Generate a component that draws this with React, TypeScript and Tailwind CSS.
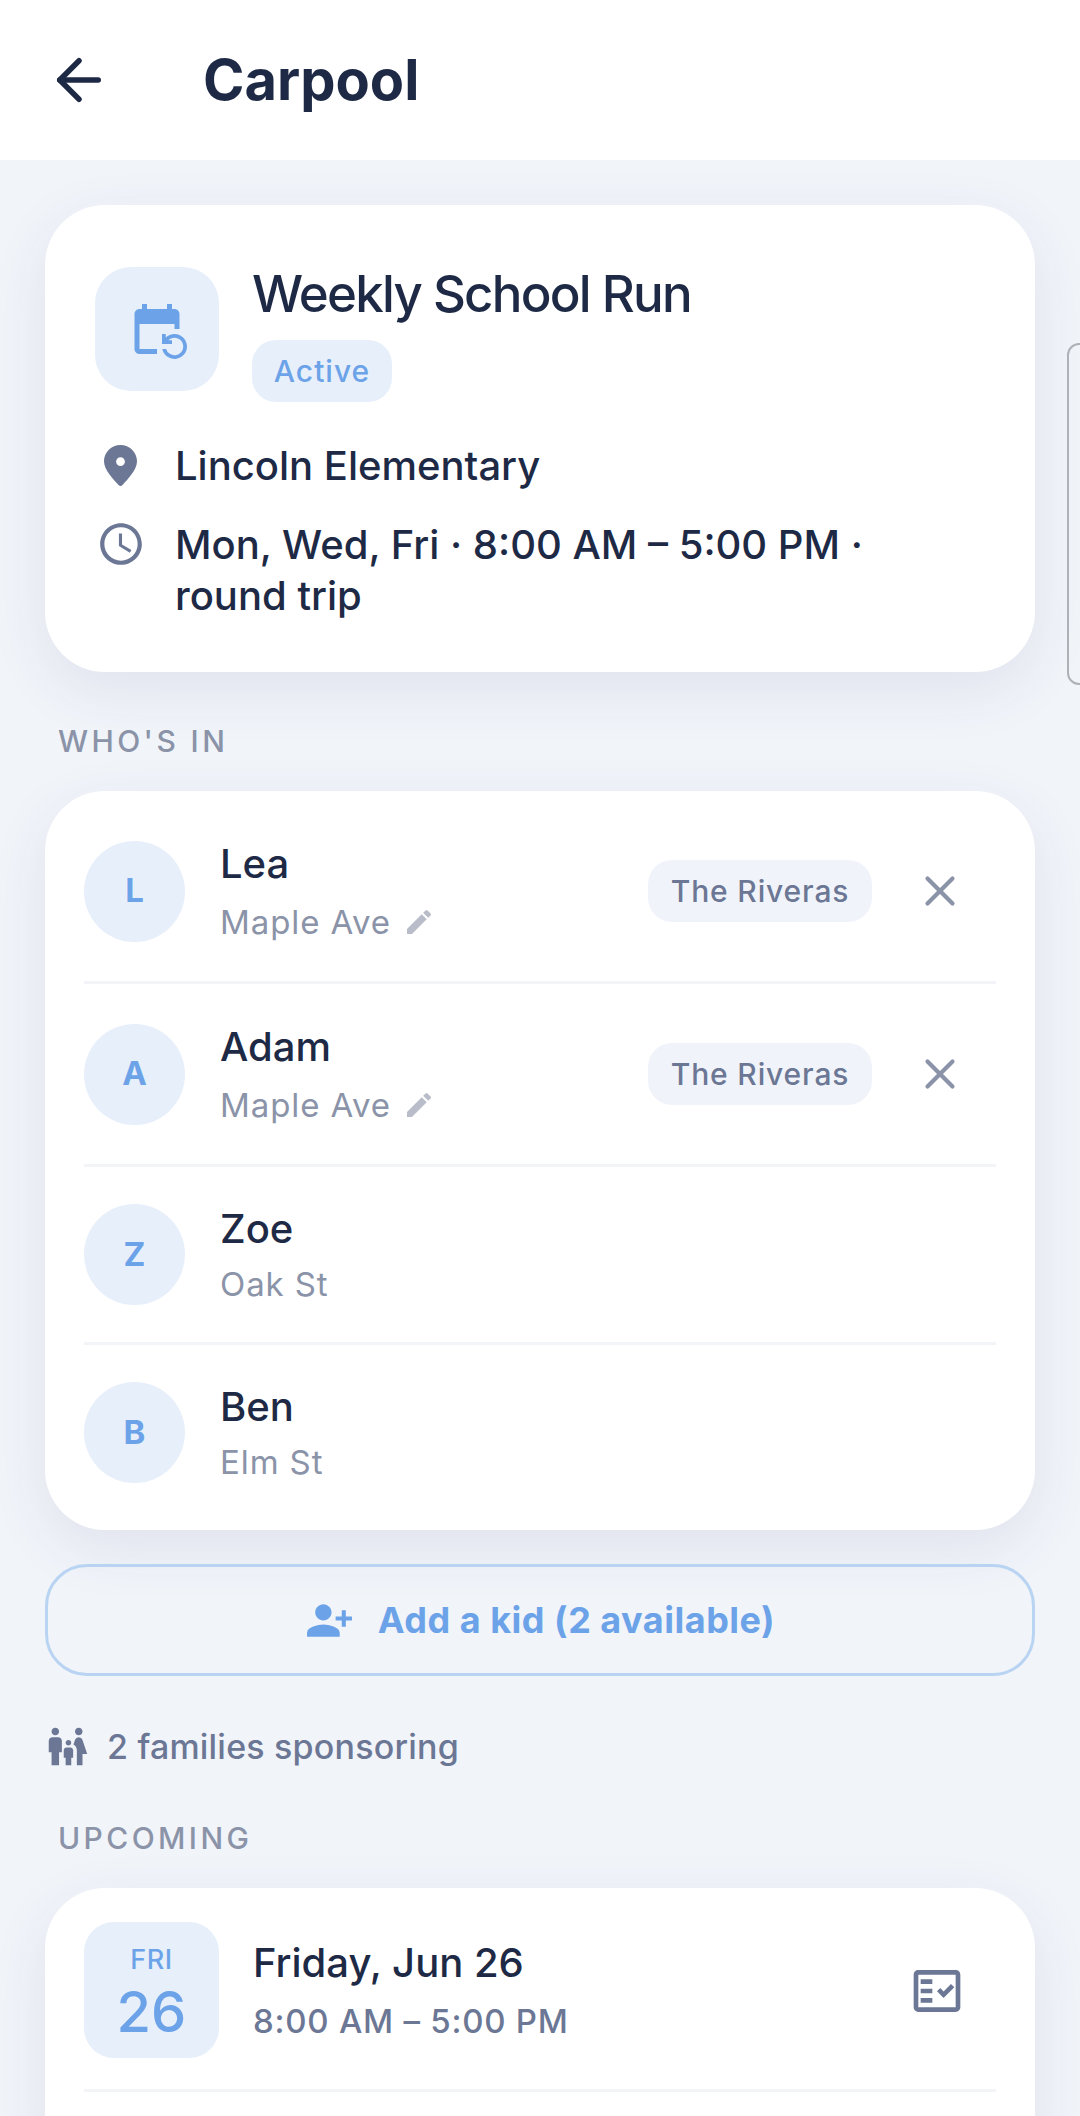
import React from "react";
import { ArrowLeft, X } from "lucide-react";
import { MdEventRepeat, MdAccessTime, MdEdit, MdPersonAddAlt1, MdFamilyRestroom, MdOutlineFactCheck } from "react-icons/md";

const Avatar = ({ c }: { c: string }) => (
  <div className="flex h-[101px] w-[101px] shrink-0 items-center justify-center rounded-full bg-[#e7effb] text-[33px] font-bold text-[#6ca3e8]">{c}</div>
);

const Kid = ({ c, name, place, editable, last }: { c: string; name: string; place: string; editable?: boolean; last?: boolean }) => (
  <div className={`flex items-center ${editable ? "h-[183px]" : last ? "h-[175px]" : "h-[178px]"} ${last ? "" : "border-b-[3px] border-[#f2f4f8]"}`}>
    <Avatar c={c} />
    <div className="ml-[35px] flex-1">
      <div className="text-[40px] leading-[51px] font-[450] text-[#1e2a45]">{name}</div>
      <div className={`${editable ? "mt-[11px]" : "mt-[8px]"} flex items-center text-[33px] leading-[45px] tracking-[0.9px] text-[#8a93a8]`}>
        {place}
        {editable && <MdEdit className="ml-[12px] text-[32px] text-[#b8bdc9]" />}
      </div>
    </div>
    {editable && (
      <>
        <div className="flex h-[62px] w-[224px] items-center justify-center rounded-[24px] bg-[#f0f4fa] text-[30px] font-medium tracking-[0.85px] text-[#6b7794]">The Riveras</div>
        <X size={50} strokeWidth={2} className="mr-[31px] ml-[43px] text-[#8a93a8]" />
      </>
    )}
  </div>
);

const Label = ({ children }: { children: string }) => (
  <div className="ml-[13px] text-[30px] leading-[39px] font-medium tracking-[3.4px] text-[#8a93a8]">{children}</div>
);

export default function App() {
  return (
    <div className="relative h-[2116px] w-[1080px] overflow-hidden bg-[#f1f4f9] font-['Inter',sans-serif]">
      <header className="relative z-10 flex h-[160px] items-center bg-white pl-[46px]">
        <ArrowLeft size={66} strokeWidth={2} className="text-[#1e2a45]" />
        <h1 className="ml-[91px] text-[56px] font-bold text-[#1e2a45]">Carpool</h1>
      </header>
      <main className="px-[45px] pt-[45px]">
        <section className="h-[467px] rounded-[60px] bg-white px-[50px] pt-[62px] shadow-[0_18px_60px_rgba(50,60,110,0.09)]">
          <div className="flex">
            <div className="flex h-[124px] w-[124px] items-center justify-center rounded-[36px] bg-[#e7effb]">
              <MdEventRepeat className="text-[60px] text-[#6ca3e8]" />
            </div>
            <div className="ml-[33px]">
              <div className="-mt-[2px] text-[51px] leading-[58px] font-medium tracking-[-1.75px] text-[#1e2a45]">Weekly School Run</div>
              <div className="mt-[17px] flex h-[62px] w-[140px] items-center justify-center rounded-[24px] bg-[#e7effb] text-[30px] font-medium tracking-[1px] text-[#6ca3e8]">Active</div>
            </div>
          </div>
          <div className="mt-[38px] flex items-center">
            <svg viewBox="0 0 33 41" className="ml-[9px] h-[41px] w-[33px] fill-[#6b7794]">
              <path fillRule="evenodd" d="M16.5 0C7.4 0 0 7.3 0 16.3 0 25 9 34 14.5 40a3 3 0 0 0 4 0C24 34 33 25 33 16.3 33 7.3 25.6 0 16.5 0Zm0 12.2a4.4 4.4 0 1 1 0 8.8 4.4 4.4 0 0 1 0-8.8Z" />
            </svg>
            <span className="ml-[38px] text-[40px] leading-[51px] font-[450] text-[#1e2a45]">Lincoln Elementary</span>
          </div>
          <div className="mt-[28px] flex items-start">
            <MdAccessTime className="ml-[1px] text-[50px] text-[#6b7794]" />
            <span className="ml-[29px] w-[740px] text-[40px] leading-[51px] font-[450] text-[#1e2a45]">Mon, Wed, Fri · 8:00 AM – 5:00 PM · round trip</span>
          </div>
        </section>
        <div className="mt-[50px] mb-[30px]"><Label>WHO'S IN</Label></div>
        <section className="rounded-[60px] bg-white px-[39px] py-[10px] shadow-[0_18px_60px_rgba(50,60,110,0.09)]">
          <Kid c="L" name="Lea" place="Maple Ave" editable />
          <Kid c="A" name="Adam" place="Maple Ave" editable />
          <Kid c="Z" name="Zoe" place="Oak St" />
          <Kid c="B" name="Ben" place="Elm St" last />
        </section>
        <button className="mt-[34px] flex h-[112px] w-full items-center justify-center rounded-[42px] border-[3px] border-[#b9d4f3] text-[36px] font-bold tracking-[0.5px] text-[#6ca3e8]">
          <MdPersonAddAlt1 className="mr-[24px] text-[49px]" />
          Add a kid (2 available)
        </button>
        <div className="mt-[48px] flex items-center text-[#6b7794]">
          <MdFamilyRestroom className="text-[45px]" />
          <span className="ml-[17px] text-[34px] leading-[44px] font-[450] tracking-[0.2px]">2 families sponsoring</span>
        </div>
        <div className="mt-[50px] mb-[30px]"><Label>UPCOMING</Label></div>
        <section className="h-[300px] rounded-[60px] bg-white px-[39px] pt-[34px] shadow-[0_18px_60px_rgba(50,60,110,0.09)]">
          <div className="flex h-[170px] items-start border-b-[3px] border-[#f2f4f8]">
            <div className="flex h-[136px] w-[135px] flex-col items-center justify-center rounded-[30px] bg-[#e7effb] pt-[6px] text-[#6ca3e8]">
              <div className="text-[27px] leading-[32px] font-medium tracking-[0.5px]">FRI</div>
              <div className="mt-[6px] text-[56px] leading-[60px] font-medium">26</div>
            </div>
            <div className="ml-[34px] flex-1 pt-[15px]">
              <div className="text-[40px] leading-[51px] font-[450] text-[#1e2a45]">Friday, Jun 26</div>
              <div className="mt-[11px] text-[33px] leading-[45px] font-[450] tracking-[0.75px] text-[#6b7794]">8:00 AM – 5:00 PM</div>
            </div>
            <MdOutlineFactCheck className="mt-[41px] mr-[31px] text-[56px] text-[#6b7794]" />
          </div>
        </section>
      </main>
      <div className="absolute top-[343px] left-[1067px] h-[342px] w-[30px] rounded-[12px] border-2 border-[#aeb1b6]" />
    </div>
  );
}
